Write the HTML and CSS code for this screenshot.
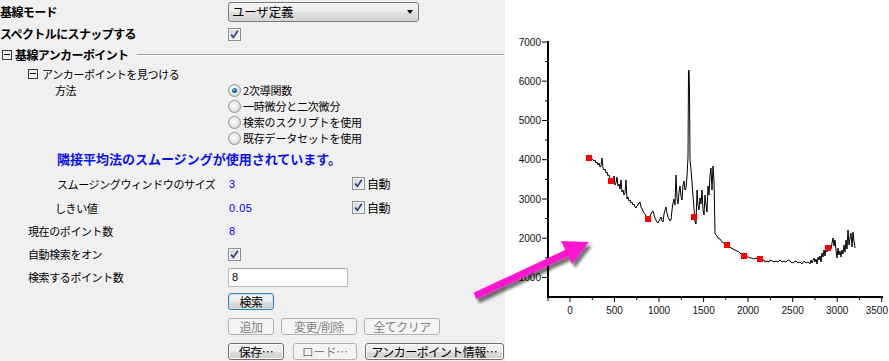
FILE: index.html
```html
<!DOCTYPE html>
<html lang="ja">
<head>
<meta charset="utf-8">
<link rel="stylesheet" href="styles.css">
</head>
<body>
<div class="page">
  <div class="panel">
    <div class="row r1">
      <div class="lbl b">基線モード</div>
      <div class="val wide"><div class="select"><span>ユーザ定義</span><span class="caret"></span></div></div>
    </div>
    <div class="row r2">
      <div class="lbl b">スペクトルにスナップする</div>
      <div class="val"><span class="cb"><svg viewBox="0 0 11 11" width="11" height="11"><path d="M2.2 5.6 L4.4 8.4 L8.8 1.8" fill="none" stroke="#2b418a" stroke-width="1.7"/></svg></span></div>
    </div>
    <div class="sect r3">
      <span class="tog"></span><span class="b sect-t">基線アンカーポイント</span><span class="rule"></span>
    </div>
    <div class="sub r4">
      <span class="tog"></span><span class="sub-t">アンカーポイントを見つける</span>
    </div>
    <div class="row r5">
      <div class="lbl l2 top">方法</div>
      <div class="val wide radios">
        <div class="ritem"><span class="rd on"></span><span>2次導関数</span></div>
        <div class="ritem"><span class="rd"></span><span>一時微分と二次微分</span></div>
        <div class="ritem"><span class="rd"></span><span>検索のスクリプトを使用</span></div>
        <div class="ritem"><span class="rd"></span><span>既存データセットを使用</span></div>
      </div>
    </div>
    <div class="note r6">隣接平均法のスムージングが使用されています。</div>
    <div class="row r7">
      <div class="lbl l2b">スムージングウィンドウのサイズ</div>
      <div class="val num">3</div>
      <div class="val auto"><span class="cb"><svg viewBox="0 0 11 11" width="11" height="11"><path d="M2.2 5.6 L4.4 8.4 L8.8 1.8" fill="none" stroke="#2b418a" stroke-width="1.7"/></svg></span><span class="auto-t">自動</span></div>
    </div>
    <div class="row r8">
      <div class="lbl l2">しきい値</div>
      <div class="val num">0.05</div>
      <div class="val auto"><span class="cb"><svg viewBox="0 0 11 11" width="11" height="11"><path d="M2.2 5.6 L4.4 8.4 L8.8 1.8" fill="none" stroke="#2b418a" stroke-width="1.7"/></svg></span><span class="auto-t">自動</span></div>
    </div>
    <div class="row r9">
      <div class="lbl l1">現在のポイント数</div>
      <div class="val num">8</div>
    </div>
    <div class="row r10">
      <div class="lbl l1">自動検索をオン</div>
      <div class="val"><span class="cb"><svg viewBox="0 0 11 11" width="11" height="11"><path d="M2.2 5.6 L4.4 8.4 L8.8 1.8" fill="none" stroke="#2b418a" stroke-width="1.7"/></svg></span></div>
    </div>
    <div class="row r11">
      <div class="lbl l1">検索するポイント数</div>
      <div class="val wide"><div class="inp">8</div></div>
    </div>
    <div class="btns">
      <div class="brow"><span class="btn focus w46">検索</span></div>
      <div class="brow"><span class="btn dis w46">追加</span><span class="btn dis w76">変更/削除</span><span class="btn dis w76">全てクリア</span></div>
      <div class="brow g9"><span class="btn w56">保存…</span><span class="btn dis w64">ロード…</span><span class="btn w140">アンカーポイント情報…</span></div>
    </div>
  </div>
  <div class="chart">
    <svg width="384" height="361" viewBox="505 0 384 361">
      <g stroke="#000" stroke-width="1">
        <line x1="548" y1="41" x2="548" y2="298" stroke-width="2"/>
        <line x1="547" y1="297" x2="883" y2="297" stroke-width="2"/>
        <line x1="542" y1="42" x2="548" y2="42"/>
        <line x1="545" y1="61.6" x2="548" y2="61.6"/>
        <line x1="542" y1="81.2" x2="548" y2="81.2"/>
        <line x1="545" y1="100.9" x2="548" y2="100.9"/>
        <line x1="542" y1="120.5" x2="548" y2="120.5"/>
        <line x1="545" y1="140.1" x2="548" y2="140.1"/>
        <line x1="542" y1="159.7" x2="548" y2="159.7"/>
        <line x1="545" y1="179.4" x2="548" y2="179.4"/>
        <line x1="542" y1="199" x2="548" y2="199"/>
        <line x1="545" y1="218.6" x2="548" y2="218.6"/>
        <line x1="542" y1="238.2" x2="548" y2="238.2"/>
        <line x1="545" y1="257.8" x2="548" y2="257.8"/>
        <line x1="542" y1="277.4" x2="548" y2="277.4"/>
        <line x1="548" y1="297" x2="548" y2="301"/>
        <line x1="570" y1="297" x2="570" y2="302"/>
        <line x1="592.3" y1="297" x2="592.3" y2="300"/>
        <line x1="614.5" y1="297" x2="614.5" y2="302"/>
        <line x1="636.8" y1="297" x2="636.8" y2="300"/>
        <line x1="659" y1="297" x2="659" y2="302"/>
        <line x1="681.3" y1="297" x2="681.3" y2="300"/>
        <line x1="703.6" y1="297" x2="703.6" y2="302"/>
        <line x1="725.8" y1="297" x2="725.8" y2="300"/>
        <line x1="748" y1="297" x2="748" y2="302"/>
        <line x1="770.4" y1="297" x2="770.4" y2="300"/>
        <line x1="792.7" y1="297" x2="792.7" y2="302"/>
        <line x1="815" y1="297" x2="815" y2="300"/>
        <line x1="837.2" y1="297" x2="837.2" y2="302"/>
        <line x1="859.5" y1="297" x2="859.5" y2="300"/>
        <line x1="881.7" y1="297" x2="881.7" y2="302"/>
      </g>
      <g class="tick" text-anchor="end">
        <text x="541" y="45.6">7000</text>
        <text x="541" y="84.8">6000</text>
        <text x="541" y="124.1">5000</text>
        <text x="541" y="163.3">4000</text>
        <text x="541" y="202.6">3000</text>
        <text x="541" y="241.8">2000</text>
        <text x="541" y="281">1000</text>
      </g>
      <g class="tick" text-anchor="middle">
        <text x="570" y="313.5">0</text>
        <text x="614.5" y="313.5">500</text>
        <text x="659" y="313.5">1000</text>
        <text x="703.6" y="313.5">1500</text>
        <text x="748" y="313.5">2000</text>
        <text x="792.7" y="313.5">2500</text>
        <text x="837.2" y="313.5">3000</text>
        <text x="888" y="313.5" text-anchor="end">3500</text>
      </g>
      <path fill="none" stroke="#000" stroke-width="1" stroke-linejoin="miter" d="M586,157 L589,158 L592,159 L594,161 L595,160 L596,163 L597,162 L598,165 L599,163 L600,167 L601,166 L602,158 L603,168 L604,170 L605,169 L606,173 L607,172 L608,176 L609,175 L610,179 L611,181 L612,180 L613,184 L614,176 L615,185 L616,183 L617,177 L618,186 L619,184 L620,189 L621,180 L622,192 L623,190 L624,195 L625,193 L626,180 L627,199 L628,197 L629,201 L630,200 L631,203 L632,202 L633,205 L634,204 L635,207 L636,208 L637,206 L638,205 L639,203 L640,202 L641,207 L642,209 L643,211 L644,213 L645,214 L646,216 L647,217 L648,219 L649,218 L650,216 L651,214 L652,212 L653,211 L654,215 L655,218 L656,220 L657,222 L658,223 L659,221 L660,219 L661,217 L662,221 L663,222 L664,214 L665,210 L666,207 L667,213 L668,217 L669,219 L670,221 L671,220 L672,210 L673,203 L674,199 L675,205 L676,175 L677,198 L678,204 L679,192 L680,186 L681,196 L682,200 L683,185 L684,181 L685,190 L686,188 L687,176 L688,157 L688.5,72 L689,70 L689.5,90 L690,160 L691,170 L692,182 L693,196 L694,208 L695,222 L696,224 L697,190 L698,205 L699,210 L700,198 L701,204 L702,190 L703,210 L704,215 L705,195 L706,205 L707,212 L708,186 L709,195 L710,175 L711,168 L712,190 L713,166 L714,180 L715,233 L716,235 L717,236 L718,238 L720,239 L722,242 L724,243 L727,245 L729,246 L731,248 L733,249 L735,250 L737,251 L739,252 L741,254 L744,256 L746,256 L748,257 L750,258 L752,258 L754,259 L756,258 L758,260 L760,259 L762,261 L764,260 L765,262 L767,261 L769,262 L770,260 L772,261 L774,262 L776,261 L778,262 L780,260 L782,262 L784,261 L786,262 L788,260 L790,261 L792,263 L794,262 L796,261 L798,263 L800,262 L802,264 L804,261 L806,263 L808,262 L810,264 L811,260 L812,263 L814,258 L815,262 L816,259 L817,264 L818,257 L819,260 L820,256 L821,262 L822,253 L823,257 L824,250 L825,256 L826,248 L827,252 L828,248 L830,246 L831,249 L832,243 L833,238 L834,246 L835,240 L836,250 L837,258 L838,248 L839,255 L840,251 L841,257 L842,250 L843,254 L844,245 L845,252 L846,240 L847,249 L848,230 L849,245 L850,238 L851,233 L852,247 L853,232 L854,241 L855,248"/>
      <g fill="#ff0000">
        <rect x="586" y="155" width="6" height="6"/>
        <rect x="608" y="178" width="6" height="6"/>
        <rect x="645" y="216" width="6" height="6"/>
        <rect x="691" y="214" width="6" height="6"/>
        <rect x="724" y="242" width="6" height="6"/>
        <rect x="741" y="253" width="6" height="6"/>
        <rect x="757" y="256" width="6" height="6"/>
        <rect x="825" y="245" width="6" height="6"/>
      </g>
    </svg>
  </div>
  <svg class="arrow" width="889" height="361" viewBox="0 0 889 361">
    <defs>
      <filter id="sh" x="-20%" y="-40%" width="150%" height="190%">
        <feGaussianBlur in="SourceAlpha" stdDeviation="1.8"/>
        <feOffset dx="3" dy="4" result="o"/>
        <feComponentTransfer><feFuncA type="linear" slope="0.55"/></feComponentTransfer>
        <feMerge><feMergeNode/><feMergeNode in="SourceGraphic"/></feMerge>
      </filter>
    </defs>
    <g filter="url(#sh)" fill="#ff19cf">
      <line x1="475" y1="296" x2="568" y2="252.5" stroke="#ff19cf" stroke-width="7"/>
      <polygon points="561,241 589,242 572,264"/>
    </g>
  </svg>
</div>
</body>
</html>
```
FILE: styles.css
```css
html, body {
  margin: 0;
  padding: 0;
}
body {
  width: 889px;
  height: 361px;
  overflow: hidden;
  font-family: "Noto Sans CJK JP", sans-serif;
  font-size: 11px;
  color: #000;
}
.page {
  position: relative;
  display: flex;
  width: 889px;
  height: 361px;
}
.panel {
  flex: none;
  width: 505px;
  height: 361px;
  background: #f0f0f0;
  display: flex;
  flex-direction: column;
  padding-right: 1px;
  box-sizing: border-box;
}
.chart {
  flex: 1;
  background: #fff;
}
.chart svg { display: block; }
.tick {
  font-family: "Liberation Sans", Arial, sans-serif;
  font-size: 10px;
  fill: #111;
}
.arrow {
  position: absolute;
  left: 0;
  top: 0;
  pointer-events: none;
}

.row {
  display: grid;
  grid-template-columns: 228px 124px 1fr;
  align-items: center;
}
.r1 { height: 23px; }
.r2 { height: 22px; }
.r3 { height: 20px; }
.r4 { height: 17px; }
.r5 { height: 64px; align-items: start; }
.r6 { height: 25px; }
.r7 { height: 25px; }
.r8 { height: 23px; }
.r9 { height: 24px; }
.r10 { height: 22px; }
.r11 { height: 24px; }

.lbl {
  line-height: 14px;
  letter-spacing: -0.4px;
  white-space: nowrap;
}
.b {
  font-weight: bold;
  font-size: 12px;
  letter-spacing: -0.6px;
}
.l1 { padding-left: 28px; }
.l2 { padding-left: 55px; }
.l2b { padding-left: 57px; }
.top { line-height: 16px; }
.val { display: flex; align-items: center; }
.wide { grid-column: 2 / 4; }

.select {
  width: 191px;
  height: 20px;
  box-sizing: border-box;
  border: 1px solid #7a7a7a;
  border-radius: 3px;
  background: linear-gradient(#f4f4f4 0%, #ececec 50%, #e0e0e0 51%, #d6d6d6 100%);
  display: flex;
  align-items: center;
  justify-content: space-between;
  padding: 0 5px 0 3px;
  font-size: 12.5px;
  letter-spacing: -0.2px;
}
.caret {
  width: 0;
  height: 0;
  border-left: 3.5px solid transparent;
  border-right: 3.5px solid transparent;
  border-top: 4px solid #000;
}

.cb {
  flex: none;
  width: 13px;
  height: 13px;
  box-sizing: border-box;
  border: 1px solid #8e8f8f;
  background: linear-gradient(135deg, #cfd0d2 0%, #e8e8ea 60%, #f4f4f4 100%);
  box-shadow: inset 0 0 0 1px #f4f4f4;
  display: flex;
  align-items: center;
  justify-content: center;
}
.cb svg { display: block; }

.sect {
  display: flex;
  align-items: center;
}
.sect .tog { margin-left: 2px; }
.sect-t { margin-left: 3px; line-height: 14px; }
.rule {
  flex: 1;
  height: 0;
  margin-left: 8px;
  border-top: 1px solid #a0a0a0;
  border-bottom: 1px solid #ffffff;
}
.tog {
  flex: none;
  position: relative;
  width: 10px;
  height: 10px;
  box-sizing: border-box;
  border: 1px solid #3a3a3a;
}
.tog::after {
  content: "";
  position: absolute;
  left: 1px;
  top: 3px;
  width: 6px;
  height: 1px;
  background: #000;
}
.sub {
  display: flex;
  align-items: center;
  padding-left: 28px;
}
.sub-t {
  margin-left: 4px;
  line-height: 14px;
  letter-spacing: -0.4px;
}

.radios {
  flex-direction: column;
  align-items: flex-start;
}
.ritem {
  height: 16px;
  display: flex;
  align-items: center;
  gap: 2px;
  letter-spacing: -0.2px;
  white-space: nowrap;
}
.rd {
  flex: none;
  position: relative;
  width: 13px;
  height: 13px;
  box-sizing: border-box;
  border-radius: 50%;
  border: 1px solid #939393;
  background: radial-gradient(circle at 45% 40%, #ffffff 0%, #e6e6e6 50%, #c9c9c9 100%);
}
.rd.on::after {
  content: "";
  position: absolute;
  left: 3px;
  top: 3px;
  width: 5px;
  height: 5px;
  border-radius: 50%;
  background: radial-gradient(circle at 40% 35%, #6fc3ee 0%, #1a6ca8 45%, #0b2f5a 100%);
}

.note {
  display: flex;
  align-items: center;
  padding-left: 57px;
  font-weight: bold;
  font-size: 13px;
  color: #0a14f0;
  white-space: nowrap;
}
.num {
  padding-left: 1px;
  font-family: "Liberation Sans", Arial, sans-serif;
  font-size: 11px;
  letter-spacing: 0.5px;
  color: #0000f0;
}
.auto { gap: 2px; }
.auto-t {
  font-size: 12px;
  letter-spacing: -0.5px;
  line-height: 14px;
}

.inp {
  width: 120px;
  height: 19px;
  box-sizing: border-box;
  border: 1px solid #b5b7bd;
  border-top-color: #a2a4a8;
  border-radius: 2px;
  background: #fff;
  padding-left: 3px;
  display: flex;
  align-items: center;
  font-family: "Liberation Sans", Arial, sans-serif;
  font-size: 11px;
}

.btns {
  display: flex;
  flex-direction: column;
  gap: 8px;
  padding-top: 4px;
  padding-left: 228px;
}
.brow {
  display: flex;
  gap: 7px;
}
.brow.g9 { gap: 8px; }
.brow.g9 .w56 { margin-right: 1px; }
.btn {
  height: 17px;
  box-sizing: border-box;
  border: 1px solid #707070;
  border-radius: 3px;
  background: linear-gradient(#f2f2f2 0%, #ebebeb 50%, #dddddd 51%, #cfcfcf 100%);
  box-shadow: inset 0 0 0 1px #fbfbfb;
  display: flex;
  align-items: center;
  justify-content: center;
  font-size: 12px;
  letter-spacing: -0.5px;
  line-height: 14px;
  white-space: nowrap;
}
.btn.focus {
  border-color: #3c7fb1;
  box-shadow: inset 0 0 0 1px #c2e4f6;
}
.btn.dis {
  border-color: #adb2b5;
  background: #f4f4f4;
  box-shadow: none;
  color: #838383;
}
.w46 { width: 46px; }
.w56 { width: 56px; }
.w64 { width: 64px; }
.w76 { width: 76px; }
.w140 { width: 140px; }
```
